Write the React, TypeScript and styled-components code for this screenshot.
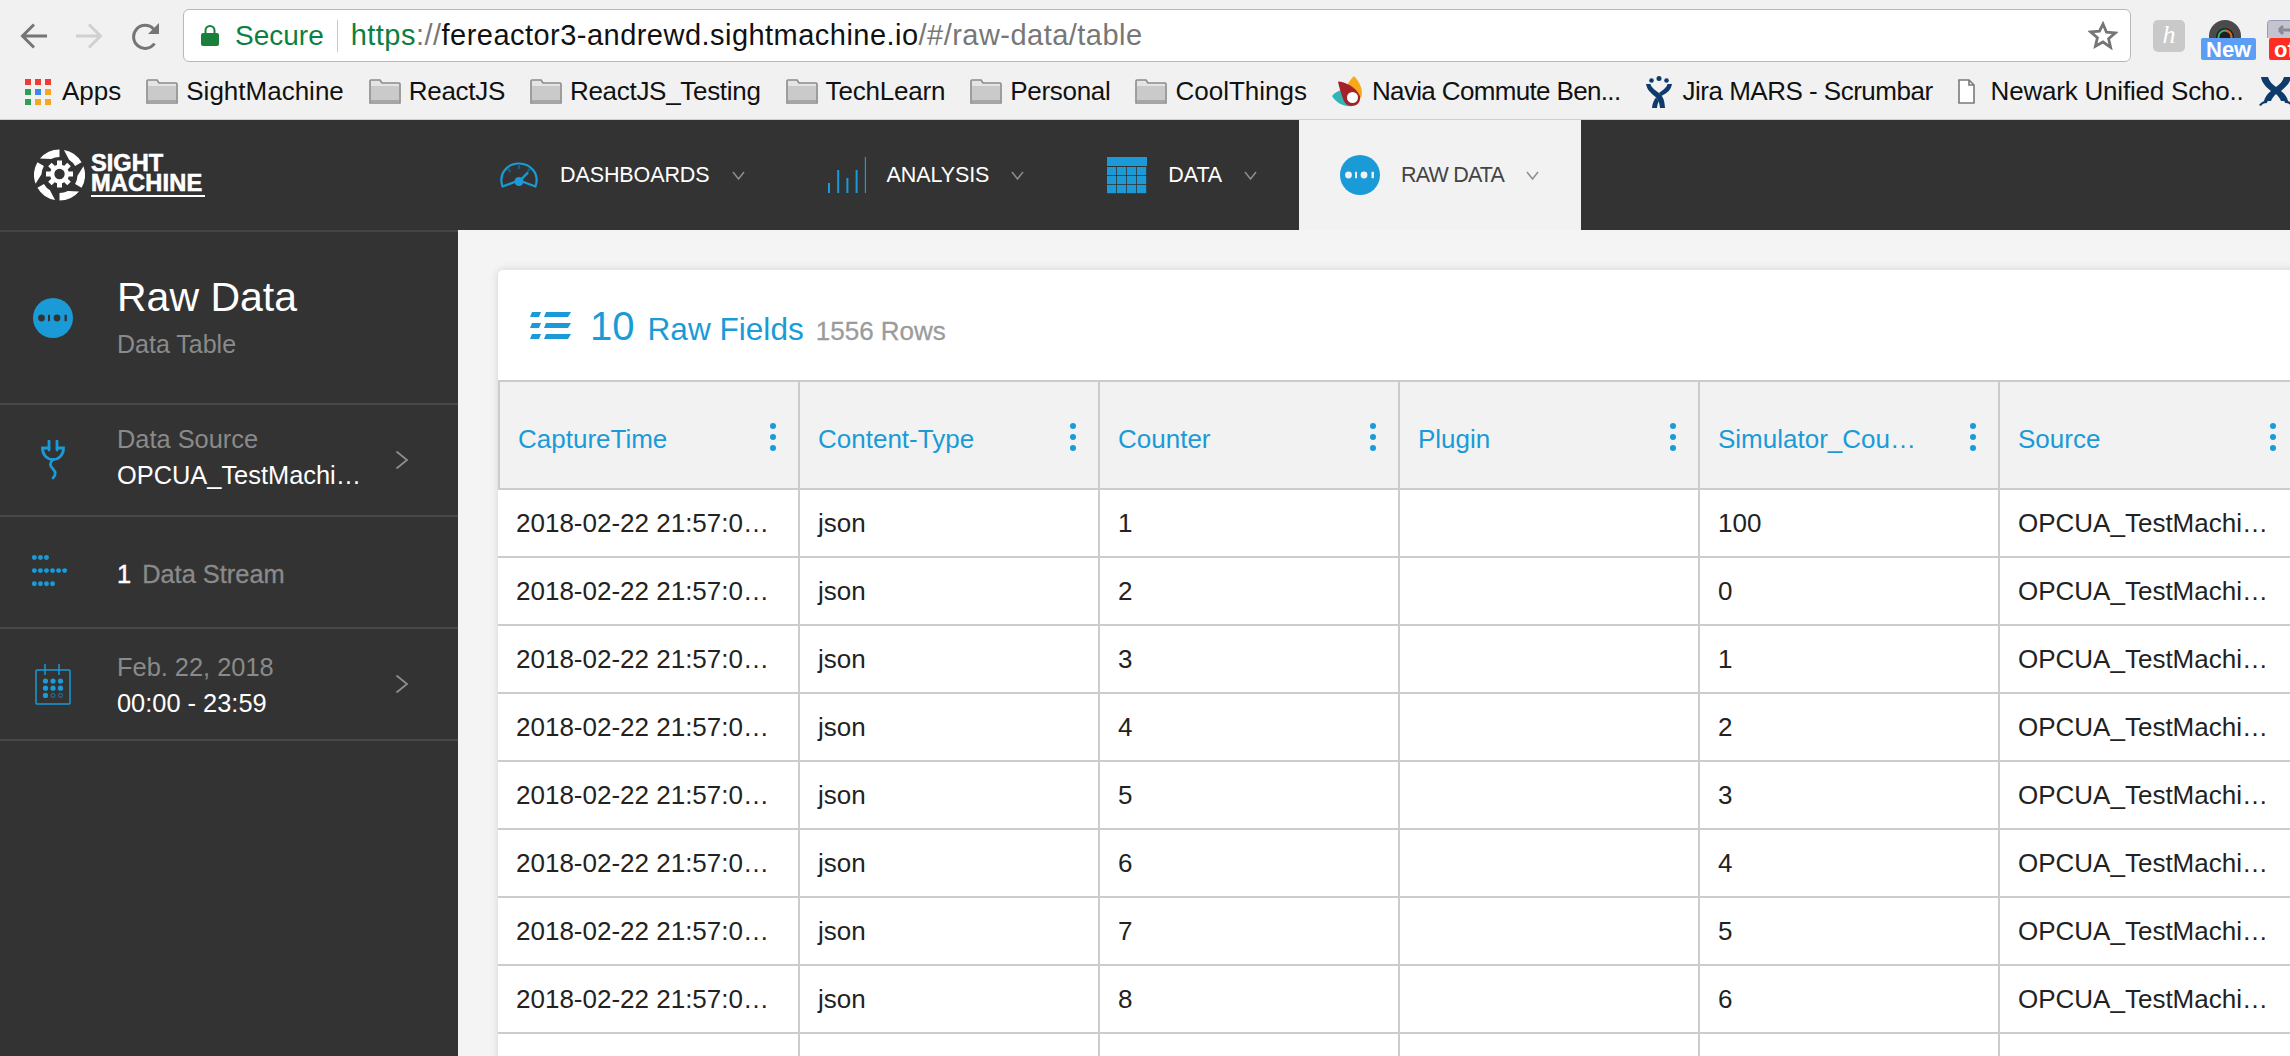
import React, { FC, ReactElement } from 'react'
import styled, { createGlobalStyle } from 'styled-components'

const BLUE = '#1a9bd7'
const DARK = '#333333'

const GlobalStyle = createGlobalStyle`
  html, body {
    margin: 0;
    padding: 0;
    overflow: hidden;
    background: #f4f4f4;
    font-family: "Liberation Sans", Arial, sans-serif;
  }
`

const Page = styled.div`
  width: 2290px;
  height: 1056px;
  overflow: hidden;
  display: flex;
  flex-direction: column;
`

const Toolbar = styled.div`
  height: 70px;
  flex: none;
  box-sizing: border-box;
  padding: 9px 0 0 20px;
  background: #f1f1f1;
  display: flex;
  align-items: flex-start;
  overflow: hidden;
`

const ToolButtons = styled.div`
  display: flex;
  gap: 29px;
  padding-top: 14px;
  flex: none;
`

const Address = styled.div`
  width: 1948px;
  height: 53px;
  margin-left: 24px;
  flex: none;
  box-sizing: border-box;
  padding: 0 12px 0 17px;
  background: #ffffff;
  border: 1px solid #b9b9b9;
  border-radius: 6px;
  display: flex;
  align-items: center;
  font-size: 28px;
`

const Secure = styled.span`
  margin-left: 16px;
  padding-right: 13px;
  height: 32px;
  line-height: 32px;
  border-right: 1px solid #c8c8c8;
  color: #0b8043;
`

const Url = styled.span`
  margin-left: 13px;
  color: #777777;
  font-size: 29px;
  letter-spacing: 0.47px;
  flex: 1;
`

const UrlPart = styled.span<{ $tone: string }>`
  color: ${props => props.$tone};
`

const Extension = styled.div<{ $left: number; $width: number }>`
  position: relative;
  flex: none;
  width: ${props => props.$width}px;
  height: 40px;
  margin: 11px 0 0 ${props => props.$left}px;
`

const HelperTile = styled.div`
  width: 32px;
  height: 32px;
  background: #c9c9c9;
  border-radius: 5px;
  color: #ffffff;
  font: italic 26px/30px "Liberation Serif", serif;
  text-align: center;
`

const Badge = styled.span<{ $tone: string; $left: number }>`
  position: absolute;
  top: 18px;
  left: ${props => props.$left}px;
  height: 22px;
  padding: 0 5px;
  background: ${props => props.$tone};
  border-radius: 2px;
  color: #ffffff;
  font-size: 22px;
  font-weight: 700;
  line-height: 23px;
  white-space: nowrap;
`

const Bookmarks = styled.div`
  height: 50px;
  flex: none;
  box-sizing: border-box;
  padding: 0 0 6px 25px;
  background: #f1f1f1;
  border-bottom: 1px solid #cfcfcf;
  display: flex;
  align-items: center;
  gap: 25px;
  font-size: 26px;
  color: #111111;
  overflow: hidden;
  white-space: nowrap;
`

const Bookmark = styled.div<{ $gap?: number; $track?: number; $pull?: number }>`
  display: flex;
  align-items: center;
  flex: none;
  gap: ${props => props.$gap ?? 8}px;
  letter-spacing: ${props => props.$track ?? 0}px;
  margin-left: ${props => props.$pull ?? 0}px;
`

const TopNav = styled.div`
  height: 110px;
  flex: none;
  background: ${DARK};
  display: flex;
`

const LogoCell = styled.div`
  width: 458px;
  flex: none;
  box-sizing: border-box;
  padding-left: 34px;
  display: flex;
  align-items: center;
  gap: 6px;
`

const LogoWords = styled.div`
  width: 114px;
  color: #ffffff;
  font-size: 23.6px;
  font-weight: 700;
  line-height: 20px;
  -webkit-text-stroke: 0.6px #ffffff;
`

const LogoMachine = styled.div`
  border-bottom: 2px solid #ffffff;
  padding-bottom: 2px;
  letter-spacing: 0.2px;
`

const NavItem = styled.div<{ $active?: boolean }>`
  height: 110px;
  box-sizing: border-box;
  padding: 0 42px 0 41px;
  flex: none;
  display: flex;
  align-items: center;
  background: ${props => (props.$active ? '#f2f2f2' : 'transparent')};
  color: ${props => (props.$active ? '#444444' : '#ffffff')};
`

const NavLabel = styled.span<{ $track?: number }>`
  margin: 0 22px 0 21px;
  font-size: 21.5px;
  letter-spacing: ${props => props.$track ?? -0.1}px;
`

const Body = styled.div`
  flex: 1;
  min-height: 0;
  display: flex;
`

const Sidebar = styled.aside`
  width: 458px;
  flex: none;
  background: ${DARK};
  border-top: 2px solid #444444;
`

const SideRow = styled.div<{ $height: number }>`
  height: ${props => props.$height}px;
  box-sizing: border-box;
  border-bottom: 2px solid #484848;
  display: flex;
  align-items: center;
`

const SideIcon = styled.div`
  width: 106px;
  flex: none;
  display: flex;
  justify-content: center;
`

const SideText = styled.div<{ $above?: number; $below?: number }>`
  width: 252px;
  margin-left: 11px;
  flex: none;
  padding: ${props => props.$above ?? 0}px 0 ${props => props.$below ?? 0}px;
`

const SideTitle = styled.div`
  color: #ffffff;
  font-size: 41px;
  line-height: 50px;
`

const SideSub = styled.div`
  color: #8a8a8a;
  font-size: 25px;
  line-height: 36px;
  margin-top: 4px;
`

const SideLabel = styled.div<{ $white?: boolean }>`
  color: ${props => (props.$white ? '#ffffff' : '#8a8a8a')};
  font-size: 25.4px;
  line-height: 36px;
  white-space: nowrap;
  overflow: hidden;
  text-overflow: ellipsis;
`

const NextArrow = styled.div`
  margin-left: 26px;
  flex: none;
  display: flex;
`

const StreamCount = styled.span`
  color: #ffffff;
  -webkit-text-stroke: 0.5px #ffffff;
  margin-right: 11px;
`

const StreamText = styled.span`
  color: #8a8a8a;
  -webkit-text-stroke: 0.3px #8a8a8a;
`

const Main = styled.main`
  flex: 1;
  min-width: 0;
  background: #f4f4f4;
  padding: 40px 0 0 40px;
  overflow: hidden;
`

const Card = styled.section`
  width: 1900px;
  background: #ffffff;
  border-radius: 5px 5px 0 0;
  box-shadow: 0 0 8px rgba(0, 0, 0, 0.14);
`

const CardHead = styled.header`
  height: 110px;
  box-sizing: border-box;
  padding-left: 32px;
  display: flex;
  align-items: center;
`

const Count = styled.div`
  margin-left: 19px;
  padding-top: 2px;
  display: flex;
  align-items: baseline;
  color: ${BLUE};
`

const CountBig = styled.span`
  font-size: 40px;
  margin-right: 13px;
`

const CountLabel = styled.span`
  font-size: 31.6px;
  margin-right: 12px;
`

const RowCount = styled.span`
  font-size: 26px;
  color: #9b9b9b;
  -webkit-text-stroke: 0.3px #9b9b9b;
`

const HeadRow = styled.div`
  display: flex;
  height: 110px;
  box-sizing: border-box;
  border-top: 2px solid #cccccc;
  border-bottom: 2px solid #cccccc;
  background: #f2f2f2;
`

const HeadCell = styled.div<{ $first: boolean }>`
  width: ${props => (props.$first ? 302 : 300)}px;
  flex: none;
  box-sizing: border-box;
  padding: 8px 22px 0 18px;
  border-right: 2px solid #cccccc;
  border-left: ${props => (props.$first ? '2px solid #cccccc' : 'none')};
  display: flex;
  align-items: center;
  justify-content: space-between;
`

const HeadLabel = styled.span`
  width: 210px;
  color: ${BLUE};
  font-size: 26px;
  white-space: nowrap;
  overflow: hidden;
  text-overflow: ellipsis;
`

const Kebab = styled.svg`
  width: 6px;
  height: 28px;
  flex: none;
  margin-bottom: 4px;
`

const DataRow = styled.div`
  display: flex;
  height: 68px;
  box-sizing: border-box;
  border-bottom: 2px solid #cccccc;
`

const DataCell = styled.div<{ $first: boolean }>`
  width: ${props => (props.$first ? 302 : 300)}px;
  flex: none;
  box-sizing: border-box;
  padding: 0 26px 0 18px;
  border-right: 2px solid #cccccc;
  color: #222222;
  font-size: 26px;
  line-height: 66px;
  white-space: nowrap;
  overflow: hidden;
  text-overflow: ellipsis;
`

const FolderIcon: FC = (): ReactElement => (
    <svg width="32" height="25" viewBox="0 0 32 25">
        <path d="M1 24V2a1 1 0 0 1 1-1h9l2 3h17a1 1 0 0 1 1 1v19z" fill="#e4e4e4" stroke="#8a8a8a" strokeWidth="1.6" />
        <rect x="2" y="7" width="28" height="14" fill="#cacaca" />
        <rect x="2" y="21" width="28" height="3" fill="#a6a6a6" />
    </svg>
)

const AppsIcon: FC = (): ReactElement => {
    const colors = ['#ef3b36', '#ef3b36', '#ef3b36', '#2f9e58', '#3b87f0', '#f5a623', '#2f9e58', '#f5a623', '#f5a623']
    return (
        <svg width="26" height="26" viewBox="0 0 26 26">
            {colors.map((color, i) => (
                <rect key={i} x={(i % 3) * 10} y={Math.floor(i / 3) * 10} width="6" height="6" fill={color} />
            ))}
        </svg>
    )
}

const NaviaIcon: FC = (): ReactElement => (
    <svg width="32" height="32" viewBox="0 0 32 32">
        <path d="M22 0C17 5 14 9 15 16l14 6C32 14 27 5 22 0z" fill="#f7a81b" />
        <path d="M0 20C5 14 11 13 17 15l3 15C13 31 5 28 0 20z" fill="#2fb5b5" />
        <path d="M6 5.500C13 6 23 10 28 20c1 6-3 10-8 10-4 0-7-2-9-7C9 17 7 11 6 5.500z" fill="#a32128" />
        <circle cx="20.500" cy="21.500" r="5.500" fill="#ffffff" />
    </svg>
)

const JiraIcon: FC = (): ReactElement => (
    <svg width="26" height="32" viewBox="0 0 26 32">
        <g fill="#0e3a6c">
            <circle cx="13" cy="2.500" r="2.500" />
            <circle cx="5.500" cy="4.500" r="2.300" />
            <circle cx="20.500" cy="4.500" r="2.300" />
            <path d="M0 8h4.500c1 4 5 6 8.500 9 3.500 3 5.500 6 6 15h-5c-.5-6-2-9-5-11.500C5 17 1 14 0 8z" />
            <path d="M26 8h-4.500c-1 4-5 6-8.500 9l2.500 3C21 17 25 14 26 8z" />
            <path d="M6 32h5c.3-3 .8-5 2-7l-3-3.500C7.500 24.500 6.300 28 6 32z" />
        </g>
    </svg>
)

const FileIcon: FC = (): ReactElement => (
    <svg width="17" height="25" viewBox="0 0 17 25" fill="none" stroke="#7a7a7a" strokeWidth="1.6">
        <path d="M1 1h10l5 5v18H1z" fill="#ffffff" />
        <path d="M11 1v5h5" />
    </svg>
)

const TrailingJiraIcon: FC = (): ReactElement => (
    <svg width="34" height="30" viewBox="0 0 34 30">
        <g fill="#0e3a6c">
            <path d="M2 0h7c1 4 4 7 8 10 4-3 7-6 8-10h7c-1 6-5 10-10 14 4 3 6 6 7 10h-7c-1-3-3-5-5-7-2 2-4 4-5 7H5c1-4 3-7 7-10C7 10 3 6 2 0z" />
            <path d="M0 28c2-3 6-5 9-5l-1 3c-3 0-5 1-6 3z" />
            <path d="M34 28c-2-3-6-5-9-5l1 3c3 0 5 1 6 3z" />
        </g>
    </svg>
)

// one shutter blade of the logo ring, tapered at its leading end
const bladePath = (start: number): string => {
    const point = (radius: number, angle: number): string => {
        const rad = (angle * Math.PI) / 180
        return `${(25.5 + radius * Math.cos(rad)).toFixed(2)} ${(26 + radius * Math.sin(rad)).toFixed(2)}`
    }
    return `M${point(25.5, start)} A25.5 25.5 0 0 1 ${point(25.5, start + 50)} L${point(18, start + 50)} A18 18 0 0 0 ${point(18, start + 22)} Z`
}

const LogoMark: FC = (): ReactElement => (
    <svg width="51" height="52" viewBox="0 0 51 52" fill="#ffffff">
        {[0, 60, 120, 180, 240, 300].map(angle => (
            <path key={angle} d={bladePath(angle - 20)} />
        ))}
        {[0, 45, 90, 135, 180, 225, 270, 315].map(angle => (
            <rect key={angle} x="23" y="11.500" width="5" height="6" transform={`rotate(${angle} 25.500 25)`} />
        ))}
        <circle cx="25.500" cy="25" r="9.500" />
        <circle cx="25.500" cy="25" r="5.200" fill={DARK} />
    </svg>
)

const GaugeIcon: FC = (): ReactElement => (
    <svg width="40" height="27" viewBox="0 0 40 27" fill="none" stroke={BLUE} strokeWidth="2.2">
        <path d="M3.500 24.500C-1 11 9 1.500 20 1.500S41 11 36.500 24.500L23 19.500H17z" strokeLinejoin="round" />
        <path d="M20 2v5M9 6.500l2.500 3.500M31 6.500L28.500 10" stroke="#155f84" />
        <path d="M20 19.500L29 10.500" strokeWidth="2.400" />
        <circle cx="20" cy="19.500" r="4.500" fill={BLUE} stroke="none" />
    </svg>
)

const BarsIcon: FC = (): ReactElement => {
    const heights = [10, 23, 15, 23, 36]
    return (
        <svg width="38" height="36" viewBox="0 0 38 36" fill={BLUE}>
            {heights.map((h, i) => (
                <rect key={i} x={i * 9.2} y={36 - h} width="2" height={h} />
            ))}
        </svg>
    )
}

const TableIcon: FC = (): ReactElement => {
    const cells: ReactElement[] = []
    for (let row = 0; row < 3; row++) {
        for (let col = 0; col < 4; col++) {
            cells.push(<rect key={`${row}-${col}`} x={col * 10} y={10 + row * 9} width="9.200" height="8.200" />)
        }
    }
    return (
        <svg width="40" height="37" viewBox="0 0 40 37" fill={BLUE}>
            <rect width="40" height="9" />
            {cells}
        </svg>
    )
}

const RawIcon: FC<{ ink: string }> = ({ ink }): ReactElement => (
    <svg width="40" height="40" viewBox="0 0 40 40">
        <circle cx="20" cy="20" r="20" fill={BLUE} />
        <circle cx="8.500" cy="20" r="3.400" fill={ink} />
        <rect x="15" y="16.800" width="2" height="6.400" fill={ink} />
        <circle cx="24" cy="20" r="3.400" fill={ink} />
        <rect x="31.500" y="16.800" width="2.400" height="6.400" fill={ink} />
    </svg>
)

const Chevron: FC = (): ReactElement => (
    <svg width="13" height="9" viewBox="0 0 13 9" fill="none" stroke="#8d8d8d" strokeWidth="1.500">
        <path d="M1 1l5.500 7L12 1" />
    </svg>
)

const NextIcon: FC = (): ReactElement => (
    <NextArrow>
        <svg width="14" height="20" viewBox="0 0 14 20" fill="none" stroke="#8d8d8d" strokeWidth="1.800">
            <path d="M1.500 1.500L12 10 1.500 18.500" />
        </svg>
    </NextArrow>
)

const PlugIcon: FC = (): ReactElement => (
    <svg width="26" height="40" viewBox="0 0 26 40" fill="none" stroke={BLUE} strokeWidth="2.800" strokeLinecap="round">
        <path d="M9 8H2.500C2.500 15 7 19.500 13 19.500S23.500 15 23.500 8H17" />
        <path d="M9 1v9M17 1v9" />
        <path d="M13 19.500c-4 3.500-3 6.500 0 9.500 3 3 3 6 0 9" />
    </svg>
)

const StreamIcon: FC = (): ReactElement => {
    const counts = [3, 6, 4]
    return (
        <svg width="48" height="34" viewBox="0 0 48 37" fill={BLUE}>
            {counts.map((count, r) =>
                Array.from({ length: count }).map((_, c) => (
                    <circle key={`${r}-${c}`} cx={3.700 + c * 6.600} cy={2.700 + r * 14.300} r="2.700" />
                ))
            )}
        </svg>
    )
}

const CalendarIcon: FC = (): ReactElement => {
    const dots = [0, 1, 2, 3, 4, 5, 6, 7, 8]
    return (
        <svg width="36" height="41" viewBox="0 0 36 41" fill="none" stroke={BLUE} strokeWidth="1.500">
            <rect x="1" y="6" width="34" height="34" rx="1" />
            <path d="M10 0v11M24 0v11" />
            {dots.map(i => (
                <circle
                    key={i}
                    cx={10.500 + (i % 3) * 7.500}
                    cy={17 + Math.floor(i / 3) * 7.200}
                    r={i > 6 ? 2 : 2.600}
                    fill={i > 6 ? 'none' : BLUE}
                    stroke={i > 6 ? BLUE : 'none'}
                    strokeWidth="0.700"
                />
            ))}
        </svg>
    )
}

const ListIcon: FC = (): ReactElement => (
    <svg width="41" height="27" viewBox="0 0 41 27" fill={BLUE}>
        {[0, 11, 22].map(y => (
            <g key={y}>
                <path d={`M2 ${y}H11L9 ${y + 5}H0z`} />
                <path d={`M16 ${y}H41L38 ${y + 5}H14z`} />
            </g>
        ))}
    </svg>
)

const columns = ['CaptureTime', 'Content-Type', 'Counter', 'Plugin', 'Simulator_Counter', 'Source']
const simulator = ['100', '0', '1', '2', '3', '4', '5', '6', '7']
const rows = simulator.map((sim, i) => [
    '2018-02-22 21:57:02.000',
    'json',
    String(i + 1),
    '',
    sim,
    'OPCUA_TestMachine_01',
])

const folders = [
    { name: 'SightMachine', track: 0 },
    { name: 'ReactJS', track: -0.3 },
    { name: 'ReactJS_Testing', track: -0.3 },
    { name: 'TechLearn', track: -0.2 },
    { name: 'Personal', track: -0.3 },
    { name: 'CoolThings', track: 0 },
]

const navItems = [
    { label: 'DASHBOARDS', icon: <GaugeIcon /> },
    { label: 'ANALYSIS', icon: <BarsIcon /> },
    { label: 'DATA', icon: <TableIcon /> },
]

const App: FC = (): ReactElement => {
    return (
        <Page>
            <GlobalStyle />
            <Toolbar>
                <ToolButtons>
                    <svg width="27" height="26" viewBox="0 0 27 26" fill="none" stroke="#757575" strokeWidth="3">
                        <path d="M27 13H3M14 1.500L2.500 13 14 24.500" />
                    </svg>
                    <svg width="27" height="26" viewBox="0 0 27 26" fill="none" stroke="#d0d0d0" strokeWidth="3">
                        <path d="M0 13h24M13 1.500L24.500 13 13 24.500" />
                    </svg>
                    <svg width="27" height="27" viewBox="0 0 27 27" fill="none" stroke="#757575" strokeWidth="3">
                        <path d="M22.500 20.500A11.500 11.500 0 1 1 21.500 6" />
                        <path d="M27 0v11H16z" fill="#757575" stroke="none" />
                    </svg>
                </ToolButtons>
                <Address>
                    <svg width="18" height="21" viewBox="0 0 18 21">
                        <path d="M4.500 9V5.500a4.500 4.500 0 0 1 9 0V9" fill="none" stroke="#188038" strokeWidth="2" />
                        <rect y="8" width="18" height="13" rx="2" fill="#188038" />
                    </svg>
                    <Secure>Secure</Secure>
                    <Url>
                        <UrlPart $tone="#0b8043">https</UrlPart>
                        <UrlPart $tone="#777777">://</UrlPart>
                        <UrlPart $tone="#111111">fereactor3-andrewd.sightmachine.io</UrlPart>
                        /#/raw-data/table
                    </Url>
                    <svg width="30" height="29" viewBox="0 0 30 29" fill="none" stroke="#757575" strokeWidth="2.800">
                        <path d="M15 3l3.500 8.200 8.800.7-6.700 5.800 2 8.600L15 21l-7.600 4.300 2-8.600-6.700-5.800 8.800-.7z" />
                    </svg>
                </Address>
                <Extension $left={22} $width={32}>
                    <HelperTile>h</HelperTile>
                </Extension>
                <Extension $left={16} $width={48}>
                    <svg width="48" height="18" viewBox="0 0 48 18">
                        <circle cx="24" cy="16" r="16" fill="#4b4b4b" />
                        <circle cx="24" cy="17" r="9" fill="#1f1f1f" />
                        <circle cx="24" cy="17" r="6.500" fill="none" stroke="#35b56a" strokeWidth="2" />
                        <path d="M24 10.500a6.500 6.500 0 0 1 6.500 6.500" fill="none" stroke="#e2552f" strokeWidth="2" />
                    </svg>
                    <Badge $tone="#5a9ef5" $left={0}>New</Badge>
                </Extension>
                <Extension $left={18} $width={40}>
                    <svg width="40" height="18" viewBox="0 0 40 18">
                        <rect x="0.500" y="0.500" width="39" height="30" rx="3" fill="#c4c4d0" stroke="#9a9ab5" />
                        <path d="M12 10h10a4 4 0 0 1 4 4v4M12 10l4-4M12 10l4 4" fill="none" stroke="#8b8b97" strokeWidth="3" />
                    </svg>
                    <Badge $tone="#ff2d20" $left={2}>off</Badge>
                </Extension>
            </Toolbar>
            <Bookmarks>
                <Bookmark $gap={11}>
                    <AppsIcon />
                    Apps
                </Bookmark>
                {folders.map(folder => (
                    <Bookmark key={folder.name} $track={folder.track}>
                        <FolderIcon />
                        {folder.name}
                    </Bookmark>
                ))}
                <Bookmark $track={-0.65}>
                    <NaviaIcon />
                    Navia Commute Ben...
                </Bookmark>
                <Bookmark $gap={11} $track={-0.5}>
                    <JiraIcon />
                    Jira MARS - Scrumbar
                </Bookmark>
                <Bookmark $gap={16} $track={-0.2}>
                    <FileIcon />
                    Newark Unified Scho..
                </Bookmark>
                <Bookmark $pull={-10}>
                    <TrailingJiraIcon />
                </Bookmark>
            </Bookmarks>
            <TopNav>
                <LogoCell>
                    <LogoMark />
                    <LogoWords>
                        SIGHT
                        <LogoMachine>MACHINE</LogoMachine>
                    </LogoWords>
                </LogoCell>
                {navItems.map(item => (
                    <NavItem key={item.label}>
                        {item.icon}
                        <NavLabel>{item.label}</NavLabel>
                        <Chevron />
                    </NavItem>
                ))}
                <NavItem $active>
                    <RawIcon ink="#f2f2f2" />
                    <NavLabel $track={-0.8}>RAW DATA</NavLabel>
                    <Chevron />
                </NavItem>
            </TopNav>
            <Body>
                <Sidebar>
                    <SideRow $height={173}>
                        <SideIcon>
                            <RawIcon ink={DARK} />
                        </SideIcon>
                        <SideText $below={1}>
                            <SideTitle>Raw Data</SideTitle>
                            <SideSub>Data Table</SideSub>
                        </SideText>
                    </SideRow>
                    <SideRow $height={112}>
                        <SideIcon>
                            <PlugIcon />
                        </SideIcon>
                        <SideText $below={6}>
                            <SideLabel>Data Source</SideLabel>
                            <SideLabel $white>OPCUA_TestMachine_01</SideLabel>
                        </SideText>
                        <NextIcon />
                    </SideRow>
                    <SideRow $height={112}>
                        <SideIcon>
                            <StreamIcon />
                        </SideIcon>
                        <SideText $above={4}>
                            <SideLabel>
                                <StreamCount>1</StreamCount>
                                <StreamText>Data Stream</StreamText>
                            </SideLabel>
                        </SideText>
                    </SideRow>
                    <SideRow $height={112}>
                        <SideIcon>
                            <CalendarIcon />
                        </SideIcon>
                        <SideText $above={2}>
                            <SideLabel>Feb. 22, 2018</SideLabel>
                            <SideLabel $white>00:00 - 23:59</SideLabel>
                        </SideText>
                        <NextIcon />
                    </SideRow>
                </Sidebar>
                <Main>
                    <Card>
                        <CardHead>
                            <ListIcon />
                            <Count>
                                <CountBig>10</CountBig>
                                <CountLabel>Raw Fields</CountLabel>
                                <RowCount>1556 Rows</RowCount>
                            </Count>
                        </CardHead>
                        <HeadRow>
                            {columns.map((column, i) => (
                                <HeadCell key={column} $first={i === 0}>
                                    <HeadLabel>{column}</HeadLabel>
                                    <Kebab viewBox="0 0 6 28" fill={BLUE}>
                                        <circle cx="3" cy="3" r="3" />
                                        <circle cx="3" cy="14" r="3" />
                                        <circle cx="3" cy="25" r="3" />
                                    </Kebab>
                                </HeadCell>
                            ))}
                        </HeadRow>
                        {rows.map((row, r) => (
                            <DataRow key={r}>
                                {row.map((value, c) => (
                                    <DataCell key={c} $first={c === 0}>{value}</DataCell>
                                ))}
                            </DataRow>
                        ))}
                    </Card>
                </Main>
            </Body>
        </Page>
    )
}

export default App
